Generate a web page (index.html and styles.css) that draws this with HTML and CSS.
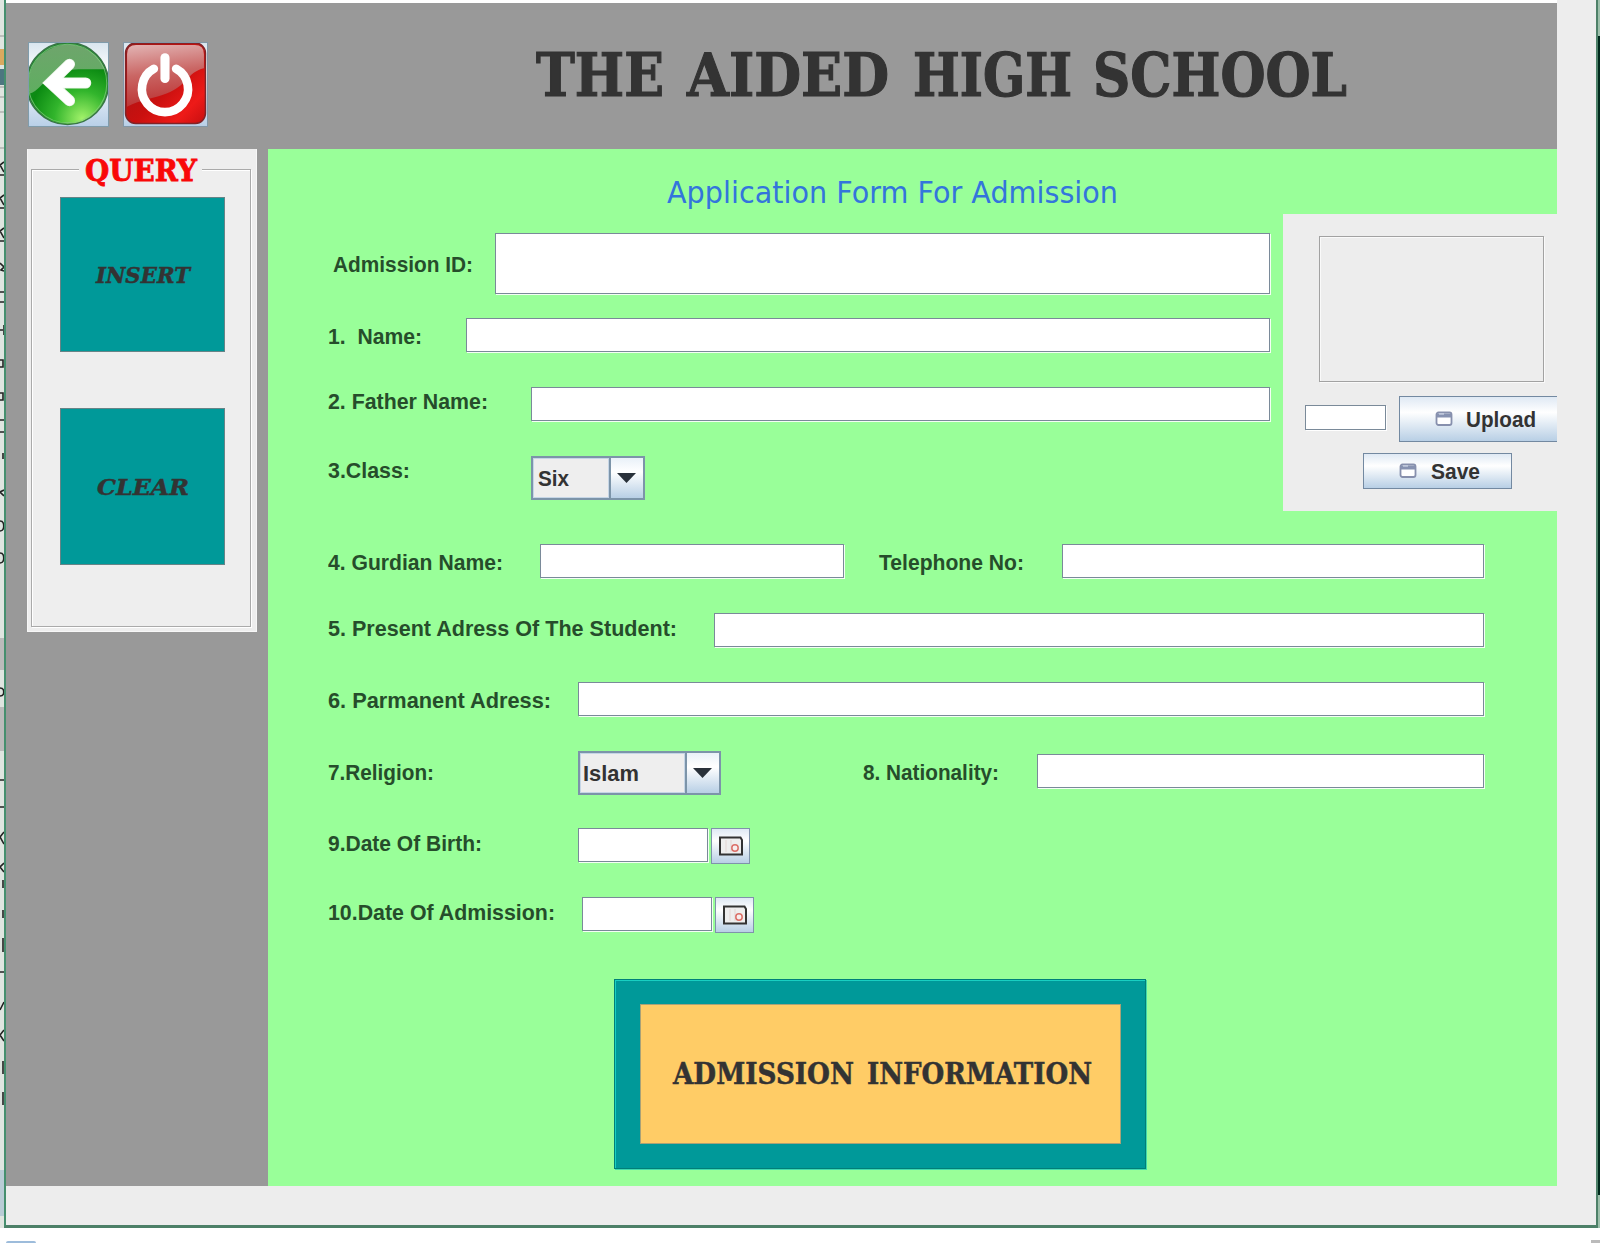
FILE: index.html
```
<!DOCTYPE html>
<html lang="en">
<head>
<meta charset="utf-8">
<title>The Aided High School</title>
<link rel="stylesheet" href="styles.css">
</head>
<body>
<div class="screen">
  <svg class="behind" width="4" height="1228" viewBox="0 0 4 1228">
    <rect width="4" height="1228" fill="#dfe5e0"/>
    <path d="M0 36h4M0 87h4M0 97h4M0 112h4M0 148h4" stroke="#999"/>
    <rect y="49" width="4" height="16" fill="#d9a95f"/><rect y="69" width="4" height="16" fill="#4d7680"/>
    <g fill="none" stroke="#222" stroke-width="1.6"><path d="M4 162l-4 3 4 7M4 175H0M4 195l-4 3 4 7M4 208H0M4 228l-4 3 4 7M4 241H0M0 263l4 4-3 3 3 1M4 292H0M4 302H0M4 325v10M0 330h3M0 360h3v7H0M0 393h3v7H0M4 420H0M0 432h4M3 453v6M4 490l-4 2 4 4M0 521c5 0 5 10 0 10M0 553c5 0 5 10 0 10M0 688c5 0 5 8 0 8M4 780H0M4 807H0M4 832l-4 5 4 7M4 863l-4 4 4 5M3 880v8M3 910v8M3 938v14M4 972H0M4 1002l-4 8M4 1030l-4 5 4 6M3 1061v13M3 1092v13"/></g>
    <rect y="638" width="4" height="32" fill="#bbb"/><rect y="707" width="4" height="44" fill="#bbb"/>
    <rect y="1170" width="4" height="46" fill="#b9ccd6"/>
  </svg>
  <div class="window">
    <header class="banner">
      <button class="icon-button back" aria-label="Back">
        <svg width="81" height="85" viewBox="0 0 80 84" preserveAspectRatio="none">
          <defs>
            <linearGradient id="sky" x1="0" y1="0" x2="0" y2="1"><stop offset="0" stop-color="#d8e5ee"/><stop offset=".35" stop-color="#fff"/><stop offset="1" stop-color="#b8cfe7"/></linearGradient>
            <radialGradient id="leaf" cx=".68" cy=".93" r=".85"><stop offset="0" stop-color="#a2f26a"/><stop offset=".4" stop-color="#32b52c"/><stop offset=".75" stop-color="#0b8a12"/><stop offset="1" stop-color="#168b24"/></radialGradient>
            <linearGradient id="gloss" x1="0" y1="0" x2="0" y2="1"><stop offset="0" stop-color="#6ea56c"/><stop offset="1" stop-color="#5fae60"/></linearGradient>
          </defs>
          <rect width="80" height="84" fill="url(#sky)"/>
          <circle cx="39" cy="41" r="40.5" fill="url(#leaf)" stroke="#397446" stroke-width="1.5"/>
          <path d="M2 51C9 49 14 40 23 35Q36 27 50 27H76A39.5 39.5 0 0 0 0 41Q0 47 2 51Z" fill="url(#gloss)"/>
          <circle cx="39" cy="41" r="38.8" fill="none" stroke="#8cc98a" stroke-opacity=".7"/>
          <path d="M41 22 22 40.500 41 58M24 40.500H57" fill="none" stroke="#e9f4e6" stroke-width="11" stroke-linecap="round"/>
          <path d="M41 22 22 40.500 41 58M24 40.500H57" fill="none" stroke="#fff" stroke-width="9.500" stroke-linecap="round"/>
          <rect x=".5" y=".5" width="79" height="83" fill="none" stroke="#809cab"/>
        </svg>
      </button>
      <button class="icon-button power" aria-label="Exit">
        <svg width="85" height="85" viewBox="0 0 84 84">
          <defs>
            <linearGradient id="red" x1="0" y1="0" x2="1" y2="1"><stop offset="0" stop-color="#9b1818"/><stop offset=".55" stop-color="#c9100f"/><stop offset=".8" stop-color="#ee1a18"/><stop offset="1" stop-color="#c60f10"/></linearGradient>
            <linearGradient id="shine" x1="0" y1="0" x2=".15" y2="1"><stop offset="0" stop-color="#e2b4b4"/><stop offset=".5" stop-color="#ca6664"/><stop offset="1" stop-color="#bc3434"/></linearGradient>
          </defs>
          <rect width="84" height="84" fill="url(#sky)"/>
          <rect x="2.500" y="1" width="79" height="79.500" rx="10" fill="url(#red)" stroke="#802327" stroke-width="1.500"/>
          <path d="M4 12Q4 3 13 3H71Q80 3 80 12V26C63 30 64 43 43 51C30 56 18 57 4 64Z" fill="url(#shine)"/>
          <path d="M30.500 26.500A22.800 22.800 0 1 0 52.500 26.500" fill="none" stroke="#fff" stroke-width="8.500" stroke-linecap="round"/>
          <path d="M41.500 15.500V36" stroke="#fff" stroke-width="9" stroke-linecap="round"/>
          <rect x=".5" y=".5" width="83" height="83" fill="none" stroke="#8297a7"/>
        </svg>
      </button>
      <svg class="school" width="820" height="100"><g class="display" font-size="60"><text x="3" y="74" textLength="128" lengthAdjust="spacingAndGlyphs">THE</text><text x="154" y="74" textLength="202" lengthAdjust="spacingAndGlyphs">AIDED</text><text x="380" y="74" textLength="159" lengthAdjust="spacingAndGlyphs">HIGH</text><text x="560" y="74" textLength="254" lengthAdjust="spacingAndGlyphs">SCHOOL</text></g></svg>
    </header>
    <div class="body">
      <aside class="query">
        <div class="query-frame">
          <svg class="query-title" width="123" height="38"><text class="display" x="6" y="30" font-size="30" textLength="112" lengthAdjust="spacingAndGlyphs">QUERY</text></svg>
          <button class="action"><svg width="110" height="30"><text class="display slanted" x="8" y="23" font-size="22" textLength="94" lengthAdjust="spacingAndGlyphs">INSERT</text></svg></button>
          <button class="action second"><svg width="110" height="30"><text class="display slanted" x="9" y="23" font-size="22" textLength="92" lengthAdjust="spacingAndGlyphs">CLEAR</text></svg></button>
        </div>
      </aside>
      <main class="form">
        <svg class="form-title" width="460" height="40"><text x="5" y="29" font-size="31" textLength="451" lengthAdjust="spacingAndGlyphs">Application Form For Admission</text></svg>
        <div class="upper">
          <div class="upper-fields">
            <div class="row r-id"><svg class="label l-id" width="162" height="44"><text x="0" y="28" textLength="140" lengthAdjust="spacingAndGlyphs">Admission ID:</text></svg><div class="field grow"></div></div>
            <div class="row r-name"><svg class="label" width="138" height="35"><text x="0" y="26" textLength="94" lengthAdjust="spacingAndGlyphs" xml:space="preserve">1.  Name:</text></svg><div class="field grow"></div></div>
            <div class="row r-father"><svg class="label" width="203" height="35"><text x="0" y="22" textLength="160" lengthAdjust="spacingAndGlyphs">2. Father Name:</text></svg><div class="field grow"></div></div>
            <div class="row r-class"><svg class="label" width="203" height="44"><text x="0" y="22" textLength="82" lengthAdjust="spacingAndGlyphs">3.Class:</text></svg>
              <div class="combo six"><svg class="value" width="76" height="40"><text x="4" y="27" textLength="31" lengthAdjust="spacingAndGlyphs">Six</text></svg><span class="arrow"><svg width="20" height="10"><path d="M0 0H19L9.500 10Z"/></svg></span></div></div>
          </div>
          <section class="photo">
            <div class="preview"></div>
            <div class="upload-row"><div class="path"></div>
              <button class="metal upload"><svg class="disk" width="18" height="16" viewBox="0 0 18 16"><rect x="1.500" y="1.500" width="15" height="12.500" rx="2" fill="#fff" stroke="#8790ad" stroke-width="1.800"/><path d="M2 2.500H16V6.500H2Z" fill="#8792b1"/><path d="M4 3H9" stroke="#dbe3f2"/></svg><svg width="72" height="32"><text x="0" y="24" textLength="70" lengthAdjust="spacingAndGlyphs">Upload</text></svg></button></div>
            <button class="metal save"><svg class="disk" width="18" height="16" viewBox="0 0 18 16"><rect x="1.500" y="1.500" width="15" height="12.500" rx="2" fill="#fff" stroke="#8790ad" stroke-width="1.800"/><path d="M2 2.500H16V6.500H2Z" fill="#8792b1"/><path d="M4 3H9" stroke="#dbe3f2"/></svg><svg width="52" height="30"><text x="0" y="23" textLength="49" lengthAdjust="spacingAndGlyphs">Save</text></svg></button>
          </section>
        </div>
        <div class="row r-guardian"><svg class="label" width="212" height="35"><text x="0" y="26" textLength="175" lengthAdjust="spacingAndGlyphs">4. Gurdian Name:</text></svg><div class="field guardian"></div><svg class="label" width="218" height="35"><text x="35" y="26" textLength="145" lengthAdjust="spacingAndGlyphs">Telephone No:</text></svg><div class="field grow"></div></div>
        <div class="row r-line"><svg class="label" width="386" height="35"><text x="0" y="23" textLength="349" lengthAdjust="spacingAndGlyphs">5. Present Adress Of The Student:</text></svg><div class="field grow"></div></div>
        <div class="row r-line"><svg class="label" width="250" height="35"><text x="0" y="26" textLength="223" lengthAdjust="spacingAndGlyphs">6. Parmanent Adress:</text></svg><div class="field grow"></div></div>
        <div class="row r-religion"><svg class="label" width="250" height="44"><text x="0" y="29" textLength="106" lengthAdjust="spacingAndGlyphs">7.Religion:</text></svg>
          <div class="combo islam"><svg class="value" width="105" height="40"><text x="2" y="27" textLength="56" lengthAdjust="spacingAndGlyphs">Islam</text></svg><span class="arrow"><svg width="20" height="10"><path d="M0 0H19L9.500 10Z"/></svg></span></div>
          <svg class="label" width="316" height="44"><text x="142" y="29" textLength="136" lengthAdjust="spacingAndGlyphs">8. Nationality:</text></svg><div class="field grow nation"></div></div>
        <div class="row r-birth"><svg class="label" width="250" height="35"><text x="0" y="23" textLength="154" lengthAdjust="spacingAndGlyphs">9.Date Of Birth:</text></svg><div class="field date"></div><button class="metal pick" aria-label="Pick date"><svg width="24" height="20" viewBox="0 0 24 20"><path d="M1 1.500H21.500L23 4V18.500H1Z" fill="#eee" stroke="#333" stroke-width="2"/><path d="M7 4v12M12 4v12" stroke="#e3d6d4"/><circle cx="16" cy="12" r="3.200" fill="#f7eeee" stroke="#db6f68" stroke-width="1.500"/></svg></button></div>
        <div class="row r-admission"><svg class="label" width="254" height="35"><text x="0" y="23" textLength="227" lengthAdjust="spacingAndGlyphs">10.Date Of Admission:</text></svg><div class="field date"></div><button class="metal pick" aria-label="Pick date"><svg width="24" height="20" viewBox="0 0 24 20"><path d="M1 1.500H21.500L23 4V18.500H1Z" fill="#eee" stroke="#333" stroke-width="2"/><path d="M7 4v12M12 4v12" stroke="#e3d6d4"/><circle cx="16" cy="12" r="3.200" fill="#f7eeee" stroke="#db6f68" stroke-width="1.500"/></svg></button></div>
        <div class="info-panel"><button class="info"><svg width="430" height="40"><g class="display" font-size="29"><text x="7" y="30" textLength="181" lengthAdjust="spacingAndGlyphs">ADMISSION</text><text x="201" y="30" textLength="225" lengthAdjust="spacingAndGlyphs">INFORMATION</text></g></svg></button></div>
      </main>
    </div>
  </div>
  <div class="edge"></div>
</div>
<footer class="below"><span class="blob"></span><span class="corner"></span></footer>
</body>
</html>
```

FILE: styles.css
```
* { box-sizing: border-box; }
body { margin: 0; width: 1600px; height: 1243px; overflow: hidden; background: #fff; font-family: "Liberation Sans", Arial, sans-serif; }
svg { display: block; flex: none; }
button { font: inherit; border: 0; padding: 0; margin: 0; display: flex; align-items: center; justify-content: center; flex: none; }

.screen { display: flex; height: 1228px; }
.behind { width: 4px; }
.window { width: 1594px; height: 1228px; background: #ededed; border: solid #4d8068; border-width: 0 2px 3px; border-left-color: #458f6e; }
.edge { width: 2px; background: linear-gradient(#9dbfab 36px, #00291c 36px 1195px, #9dbfab 1195px); }

.banner { width: 1551px; height: 149px; border-top: 3px solid #fff; background: #999; display: flex; align-items: flex-start; padding: 19px 0 0 22px; }
.icon-button { background: none; margin-top: 20px; }
.power { margin-left: 14px; }
.school { margin-left: 325px; }

.body { display: flex; width: 1551px; height: 1037px; background: #999; }
.query { width: 230px; height: 483px; margin-left: 21px; padding: 20px 5px 5px 3px; background: #eee; border: 1px solid #f7f7f7; border-width: 0 1px 1px; }
.query-frame { height: 458px; border: 1px solid #aaa; box-shadow: inset 1px 1px #fff, 1px 1px #fff; display: flex; flex-direction: column; align-items: center; }
.query-title { margin: -19px 0 0 -1px; background: #eee; fill: #f90808; stroke: #f90808; stroke-width: .8px; }
.action { width: 165px; height: 155px; margin: 8px 0 0 3px; background: #009999; border: 1px solid #668487; }
.action.second { margin-top: 56px; height: 157px; }
.display { font-family: "DejaVu Serif", serif; font-weight: bold; }
.slanted { font-style: italic; }
.school, .action svg, .info svg { fill: #333; stroke: #333; stroke-width: .5px; }
.school { stroke-width: 1.2px; }

.form { width: 1289px; margin-left: 11px; background: #99ff99; padding-top: 25px; }
.form-title { margin-left: 394px; fill: #3375dc; font-family: "DejaVu Sans", sans-serif; }
.upper { display: flex; height: 297px; }
.upper-fields { width: 1015px; padding: 19px 13px 0 0; }
.row { display: flex; align-items: flex-start; padding-left: 60px; }
.label, .value, .metal svg { font-size: 22.5px; font-weight: bold; }
.label { fill: #264d2b; }
.value, .metal svg { fill: #333; }
.l-id { margin-left: 5px; }
.r-id .label { margin-top: 11px; }
.field { height: 34px; flex: none; background: #fff; border: 1px solid #7a8a99; box-shadow: 1px 1px #f4fff4; }
.grow { flex: 1; }
.r-id { height: 85px; }
.r-id .field { height: 61px; }
.r-name { height: 69px; }
.r-father { height: 69px; }
.combo { display: flex; height: 44px; background: #eee; border: 2px solid #7c94a9; }
.six { width: 114px; }
.islam { width: 143px; }
.value { border: 1px solid #c6d6e6; }
.arrow { flex: 1; border-left: 2px solid #7c94a9; display: flex; align-items: center; justify-content: center; background: linear-gradient(#e9f1f8, #fff 35%, #b8cfe5); fill: #29313a; }

.photo { width: 274px; height: 297px; background: #ededed; }
.preview { width: 225px; height: 146px; margin: 22px 0 0 36px; border: 1px solid #a2a2a2; box-shadow: inset 1px 1px #fafafa, 1px 1px #fafafa; }
.upload-row { display: flex; margin: 14px 0 0 22px; }
.path { width: 81px; height: 25px; flex: none; margin: 9px 13px 0 0; background: #fff; border: 1px solid #7a8a99; box-shadow: 1px 1px #fff; }
.metal { background: linear-gradient(#dfe9f4, #fff 35%, #b8cfe5); border: 1px solid #7389a1; }
.upload { width: 158px; height: 46px; border-right: 0; justify-content: flex-start; padding-left: 35px; }
.upload .disk { margin-right: 13px; }
.save { width: 149px; height: 36px; margin: 11px 0 0 80px; padding-left: 35px; justify-content: flex-start; }
.save .disk { margin-right: 14px; }

.r-guardian, .r-line, .r-religion { padding-right: 73px; }
.r-guardian { margin-top: 33px; height: 69px; }
.guardian { width: 304px; }
.r-line { height: 69px; }
.r-religion { height: 77px; }
.nation { margin-top: 3px; }
.r-birth { height: 69px; }
.date { width: 130px; }
.pick { width: 39px; height: 36px; margin-left: 3px; border-color: #7f93aa; }
.info-panel { width: 532px; height: 190px; margin: 46px 0 0 346px; padding: 24px 24px 24px 25px; background: #009999; border: 1px solid #007f78; box-shadow: inset 1px 1px #19cfc2, 1px 1px #43d9ae; }
.info { width: 481px; height: 140px; background: #ffcc66; border: 1px solid #a9a177; }

.below { display: flex; height: 15px; justify-content: space-between; align-items: flex-end; padding-left: 6px; }
.blob { width: 30px; height: 2px; border-radius: 8px 8px 0 0; background: #9dbcdb; }
.corner { width: 9px; height: 3px; background: #bbb; }
```
